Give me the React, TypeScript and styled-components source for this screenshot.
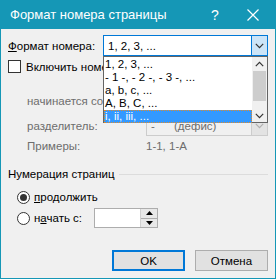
import React from 'react';
import styled, {createGlobalStyle} from 'styled-components';

const GlobalStyle = createGlobalStyle`
    html, body {
        margin: 0;
        padding: 0;
        background: #f0f0f0;
    }

    body {
        font-family: "Liberation Sans", Arial, sans-serif;
        font-size: 11.5px;
        color: #000;
    }
`;

const formats = ['1, 2, 3, ...', '- 1 -, - 2 -, - 3 -, ...', 'a, b, c, ...', 'A, B, C, ...', 'i, ii, iii, ...'];

function Chevron({up, color = '#333'}: { up?: boolean; color?: string }) {
    return (
        <svg width="9" height="6" viewBox="0 0 9 6">
            <path d={up ? 'M0.8 5.2 L4.5 1.3 L8.2 5.2' : 'M0.8 0.8 L4.5 4.7 L8.2 0.8'} fill="none" stroke={color}
                  strokeWidth="1.2"/>
        </svg>
    );
}

function Triangle({up}: { up?: boolean }) {
    return (
        <svg width="7" height="4" viewBox="0 0 7 4">
            <path d={up ? 'M0 4 L3.5 0 L7 4 Z' : 'M0 0 L3.5 4 L7 0 Z'} fill="#000"/>
        </svg>
    );
}

export default function App() {
    return (
        <>
            <GlobalStyle/>
            <Dialog>
                <TitleBar>
                    <Title>Формат номера страницы</Title>
                    <TitleButton $w={30}>?</TitleButton>
                    <TitleButton $w={46}>
                        <svg width="12" height="12" viewBox="0 0 12 12">
                            <path d="M0.5 0.5 L11.5 11.5 M11.5 0.5 L0.5 11.5" stroke="#fff" strokeWidth="1.2"/>
                        </svg>
                    </TitleButton>
                </TitleBar>
                <Body>
                    <FormatRow>
                        <Label><u>Ф</u>ормат номера:</Label>
                        <ComboWrap>
                            <Combo $active>
                                <ComboText>1, 2, 3, ...</ComboText>
                                <ComboButton $active><Chevron/></ComboButton>
                            </Combo>
                            <ListBox>
                                <Items>
                                    {formats.map((f, i) => (
                                        <Item key={f} $selected={i === formats.length - 1}>{f}</Item>
                                    ))}
                                </Items>
                                <ScrollBar>
                                    <ScrollArrow><Chevron up/></ScrollArrow>
                                    <Thumb/>
                                    <ScrollSpacer/>
                                    <ScrollArrow><Chevron/></ScrollArrow>
                                </ScrollBar>
                            </ListBox>
                        </ComboWrap>
                    </FormatRow>

                    <CheckRow>
                        <CheckBox/>
                        <span>Включить номер главы</span>
                    </CheckRow>

                    <IndentRow $top={17}>
                        <Disabled>начинается со стиля</Disabled>
                        <Combo $disabled $width={122}>
                            <ComboText>Заголовок 1</ComboText>
                            <ComboButton $disabled><Chevron color="#b0b0b0"/></ComboButton>
                        </Combo>
                    </IndentRow>
                    <IndentRow $top={4}>
                        <Disabled>разделитель:</Disabled>
                        <Combo $disabled $width={122}>
                            <ComboText $gray>-&nbsp;&nbsp;&nbsp;&nbsp;&nbsp;&nbsp;(дефис)</ComboText>
                            <ComboButton $disabled><Chevron color="#b0b0b0"/></ComboButton>
                        </Combo>
                    </IndentRow>
                    <IndentRow $top={2} $plain>
                        <Disabled>Примеры:</Disabled>
                        <Disabled>1-1, 1-A</Disabled>
                    </IndentRow>

                    <GroupHeader>
                        <span>Нумерация страниц</span>
                        <Line/>
                    </GroupHeader>

                    <RadioRow $top={7}>
                        <Radio $checked/>
                        <span><u>п</u>родолжить</span>
                    </RadioRow>
                    <RadioRow $top={3} $h={20}>
                        <Radio/>
                        <RadioLabel>н<u>а</u>чать с:</RadioLabel>
                        <Spin>
                            <SpinInput/>
                            <SpinButtons>
                                <SpinButton><Triangle up/></SpinButton>
                                <SpinButton><Triangle/></SpinButton>
                            </SpinButtons>
                        </Spin>
                    </RadioRow>

                    <Buttons>
                        <Button $primary>OK</Button>
                        <Button>Отмена</Button>
                    </Buttons>
                </Body>
            </Dialog>
        </>
    );
}

const Dialog = styled.div`
    width: 276px;
    height: 279px;
    box-sizing: border-box;
    border: 1px solid #1597b6;
    border-top: none;
    display: flex;
    flex-direction: column;
    background: #f0f0f0;
    overflow: hidden;
`;

const TitleBar = styled.div`
    height: 29px;
    flex-shrink: 0;
    background: #1597b6;
    color: #fff;
    display: flex;
    align-items: center;
    margin: 0 -1px;
`;

const Title = styled.div`
    flex: 1;
    padding-left: 10px;
    font-size: 13px;
    white-space: nowrap;
`;

const TitleButton = styled.div<{ $w: number }>`
    width: ${p => p.$w}px;
    height: 29px;
    display: flex;
    align-items: center;
    justify-content: center;
    font-size: 14px;
`;

const Body = styled.div`
    flex: 1;
    padding: 6px 7px 0 6px;
    display: flex;
    flex-direction: column;
`;

const FormatRow = styled.div`
    height: 21px;
    display: flex;
    align-items: center;
    justify-content: space-between;
    padding-left: 1px;
`;

const Label = styled.span`
    white-space: nowrap;
`;

const ComboWrap = styled.div`
    position: relative;
    z-index: 2;
`;

const Combo = styled.div<{ $active?: boolean; $disabled?: boolean; $width?: number }>`
    width: ${p => p.$width ?? 165}px;
    height: 21px;
    box-sizing: border-box;
    border: 1px solid ${p => p.$active ? '#0078d7' : p.$disabled ? '#cccccc' : '#7a7a7a'};
    background: ${p => p.$disabled ? '#f0f0f0' : '#fff'};
    display: flex;
    align-items: center;
`;

const ComboText = styled.span<{ $gray?: boolean }>`
    flex: 1;
    padding-left: 4px;
    white-space: nowrap;
    overflow: hidden;
    color: ${p => p.$gray ? '#6d6d6d' : 'inherit'};
`;

const ComboButton = styled.div<{ $active?: boolean; $disabled?: boolean }>`
    width: 16px;
    height: 19px;
    box-sizing: border-box;
    display: flex;
    align-items: center;
    justify-content: center;
    background: ${p => p.$active ? '#cce4f7' : p.$disabled ? '#e3e3e3' : 'transparent'};
    border-left: 1px solid ${p => p.$active ? '#0078d7' : p.$disabled ? '#cccccc' : 'transparent'};
`;

const ListBox = styled.div`
    position: absolute;
    top: 21px;
    left: 0;
    width: 165px;
    height: 67px;
    box-sizing: border-box;
    border: 1px solid #646464;
    background: #fff;
    display: flex;
`;

const Items = styled.div`
    flex: 1;
    padding-top: 1px;
    display: flex;
    flex-direction: column;
`;

const Item = styled.div<{ $selected?: boolean }>`
    height: 13px;
    line-height: 13px;
    padding-left: 1px;
    white-space: nowrap;
    box-sizing: border-box;
    color: ${p => p.$selected ? '#fff' : '#000'};
    background: ${p => p.$selected ? '#3399ff' : 'transparent'};
    outline: ${p => p.$selected ? '1px dotted #e08a2a' : 'none'};
    outline-offset: -1px;
`;

const ScrollBar = styled.div`
    width: 15px;
    background: #f0f0f0;
    display: flex;
    flex-direction: column;
`;

const ScrollArrow = styled.div`
    height: 13px;
    display: flex;
    align-items: center;
    justify-content: center;
`;

const Thumb = styled.div`
    height: 30px;
    margin: 1px 1px 0;
    background: #cdcdcd;
`;

const ScrollSpacer = styled.div`
    flex: 1;
`;

const CheckRow = styled.div`
    height: 13px;
    display: flex;
    align-items: center;
    gap: 5px;
    margin-top: 4px;
    padding-left: 1px;
    white-space: nowrap;
`;

const CheckBox = styled.div`
    width: 13px;
    height: 13px;
    box-sizing: border-box;
    border: 1px solid #333;
    background: #fff;
`;

const IndentRow = styled.div<{ $top: number; $plain?: boolean }>`
    display: flex;
    align-items: center;
    justify-content: space-between;
    margin-top: ${p => p.$top}px;
    padding-left: 20px;
    height: ${p => p.$plain ? 16 : 21}px;

    & > span:last-child {
        width: 122px;
    }
`;

const Disabled = styled.span`
    color: #6d6d6d;
    white-space: nowrap;
`;

const GroupHeader = styled.div`
    height: 16px;
    display: flex;
    align-items: center;
    gap: 4px;
    margin-top: 12px;
    padding-left: 1px;
`;

const Line = styled.div`
    flex: 1;
    height: 1px;
    background: #dcdcdc;
    margin-top: 1px;
`;

const RadioRow = styled.div<{ $top: number; $h?: number }>`
    height: ${p => p.$h ?? 16}px;
    display: flex;
    align-items: center;
    gap: 4px;
    margin-top: ${p => p.$top}px;
    padding-left: 10px;
`;

const Radio = styled.div<{ $checked?: boolean }>`
    width: 13px;
    height: 13px;
    box-sizing: border-box;
    border-radius: 50%;
    border: 1px solid #333;
    background: #fff;
    position: relative;

    &::after {
        content: '';
        display: ${p => p.$checked ? 'block' : 'none'};
        position: absolute;
        left: 2px;
        top: 2px;
        width: 7px;
        height: 7px;
        border-radius: 50%;
        background: #333;
    }
`;

const RadioLabel = styled.span`
    width: 56px;
`;

const Spin = styled.div`
    width: 64px;
    height: 20px;
    box-sizing: border-box;
    border: 1px solid #adadad;
    background: #fff;
    display: flex;
`;

const SpinInput = styled.div`
    flex: 1;
`;

const SpinButtons = styled.div`
    width: 16px;
    display: flex;
    flex-direction: column;
    border-left: 1px solid #d0d0d0;
`;

const SpinButton = styled.div`
    flex: 1;
    background: #e8e8e8;
    display: flex;
    align-items: center;
    justify-content: center;

    & + & {
        border-top: 1px solid #adadad;
    }
`;

const Buttons = styled.div`
    display: flex;
    justify-content: flex-end;
    gap: 10px;
    margin-top: 22px;
`;

const Button = styled.div<{ $primary?: boolean }>`
    width: 73px;
    height: 21px;
    box-sizing: border-box;
    border: ${p => p.$primary ? '2px solid #0078d7' : '1px solid #adadad'};
    background: #e1e1e1;
    display: flex;
    align-items: center;
    justify-content: center;
`;
